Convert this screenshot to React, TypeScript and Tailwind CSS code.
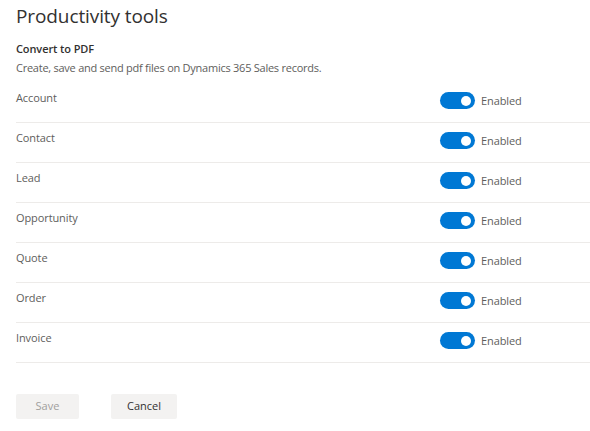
import React from 'react';

const entities = ['Account', 'Contact', 'Lead', 'Opportunity', 'Quote', 'Order', 'Invoice'];

const Toggle = () => (
  <div className="w-[35px] h-[17px] rounded-full bg-[#0078d4] flex items-center justify-end pr-[4px]">
    <div className="w-[10px] h-[10px] rounded-full bg-white" />
  </div>
);

const App = () => {
  return (
    <div className="w-[590px] h-[431px] bg-white pl-4 text-[#323130] font-['Open_Sans',sans-serif] overflow-hidden">
      <h1 className="text-[19px] leading-[28px] pt-[2px] tracking-[-0.1px]">Productivity tools</h1>
      <div className="mt-[11px] text-[11px] leading-[16px] font-semibold tracking-[-0.1px]">Convert to PDF</div>
      <div className="mt-[3px] text-[11px] leading-[16px] text-[#605e5c] tracking-[-0.25px]">
        Create, save and send pdf files on Dynamics 365 Sales records.
      </div>
      <div className="mt-[7px]">
        {entities.map((name) => (
          <div key={name} className="h-[40px] border-b border-[#edebe9] flex items-start">
            <div className="flex-1 pt-[7px] text-[11px] leading-[16px] text-[#605e5c] tracking-[-0.1px]">{name}</div>
            <div className="w-[150px] flex items-center gap-[6px] pt-[9px]">
              <Toggle />
              <span className="text-[11px] leading-[16px] text-[#605e5c] tracking-[-0.1px]">Enabled</span>
            </div>
          </div>
        ))}
      </div>
      <div className="mt-[31px] flex gap-[32px]">
        <button className="w-[63px] h-[25px] bg-[#f3f2f1] text-[#a19f9d] text-[11px] rounded-[2px]">Save</button>
        <button className="w-[66px] h-[25px] bg-[#f3f2f1] text-[#323130] text-[11px] rounded-[2px]">Cancel</button>
      </div>
    </div>
  );
};

export default App;
